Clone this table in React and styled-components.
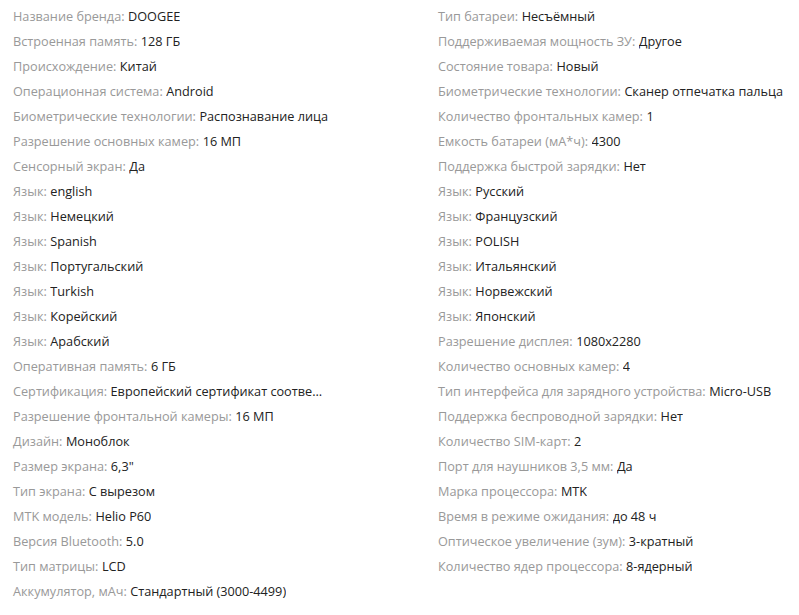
import React from "react";
import styled, { createGlobalStyle } from "styled-components";

const Global = createGlobalStyle`
  html, body { margin: 0; padding: 0; background: #fff; }
  body { font-family: "Open Sans", "Liberation Sans", sans-serif; }
`;

const left = [
  ["Название бренда", "DOOGEE"],
  ["Встроенная память", "128 ГБ"],
  ["Происхождение", "Китай"],
  ["Операционная система", "Android"],
  ["Биометрические технологии", "Распознавание лица"],
  ["Разрешение основных камер", "16 МП"],
  ["Сенсорный экран", "Да"],
  ["Язык", "english"],
  ["Язык", "Немецкий"],
  ["Язык", "Spanish"],
  ["Язык", "Португальский"],
  ["Язык", "Turkish"],
  ["Язык", "Корейский"],
  ["Язык", "Арабский"],
  ["Оперативная память", "6 ГБ"],
  ["Сертификация", "Европейский сертификат соответствия (CE)"],
  ["Разрешение фронтальной камеры", "16 МП"],
  ["Дизайн", "Моноблок"],
  ["Размер экрана", "6,3\""],
  ["Тип экрана", "С вырезом"],
  ["MTK модель", "Helio P60"],
  ["Версия Bluetooth", "5.0"],
  ["Тип матрицы", "LCD"],
  ["Аккумулятор, мАч", "Стандартный (3000-4499)"],
];

const right = [
  ["Тип батареи", "Несъёмный"],
  ["Поддерживаемая мощность ЗУ", "Другое"],
  ["Состояние товара", "Новый"],
  ["Биометрические технологии", "Сканер отпечатка пальца"],
  ["Количество фронтальных камер", "1"],
  ["Емкость батареи (мА*ч)", "4300"],
  ["Поддержка быстрой зарядки", "Нет"],
  ["Язык", "Русский"],
  ["Язык", "Французский"],
  ["Язык", "POLISH"],
  ["Язык", "Итальянский"],
  ["Язык", "Норвежский"],
  ["Язык", "Японский"],
  ["Разрешение дисплея", "1080x2280"],
  ["Количество основных камер", "4"],
  ["Тип интерфейса для зарядного устройства", "Micro-USB"],
  ["Поддержка беспроводной зарядки", "Нет"],
  ["Количество SIM-карт", "2"],
  ["Порт для наушников 3,5 мм", "Да"],
  ["Марка процессора", "MTK"],
  ["Время в режиме ожидания", "до 48 ч"],
  ["Оптическое увеличение (зум)", "3-кратный"],
  ["Количество ядер процессора", "8-ядерный"],
];

const Specs = styled.div`
  display: grid;
  grid-template-columns: 425px 1fr;
  padding: 4px 0 0 13px;
`;

const Column = styled.ul`
  list-style: none;
  margin: 0;
  padding: 0;
`;

const Row = styled.li`
  height: 25px;
  line-height: 25px;
  font-size: 12.7px;
  white-space: nowrap;
  display: flex;
`;

const Label = styled.span`
  color: #999;
`;

const Value = styled.span`
  color: #222;
  margin-left: 3.5px;
  max-width: 212px;
  overflow: hidden;
  text-overflow: ellipsis;
  white-space: nowrap;
`;

function List({ items }) {
  return (
    <Column>
      {items.map(([k, v], i) => (
        <Row key={i}>
          <Label>{k}:</Label>
          <Value>{v}</Value>
        </Row>
      ))}
    </Column>
  );
}

export default function App() {
  return (
    <>
      <Global />
      <Specs>
        <List items={left} />
        <List items={right} />
      </Specs>
    </>
  );
}
